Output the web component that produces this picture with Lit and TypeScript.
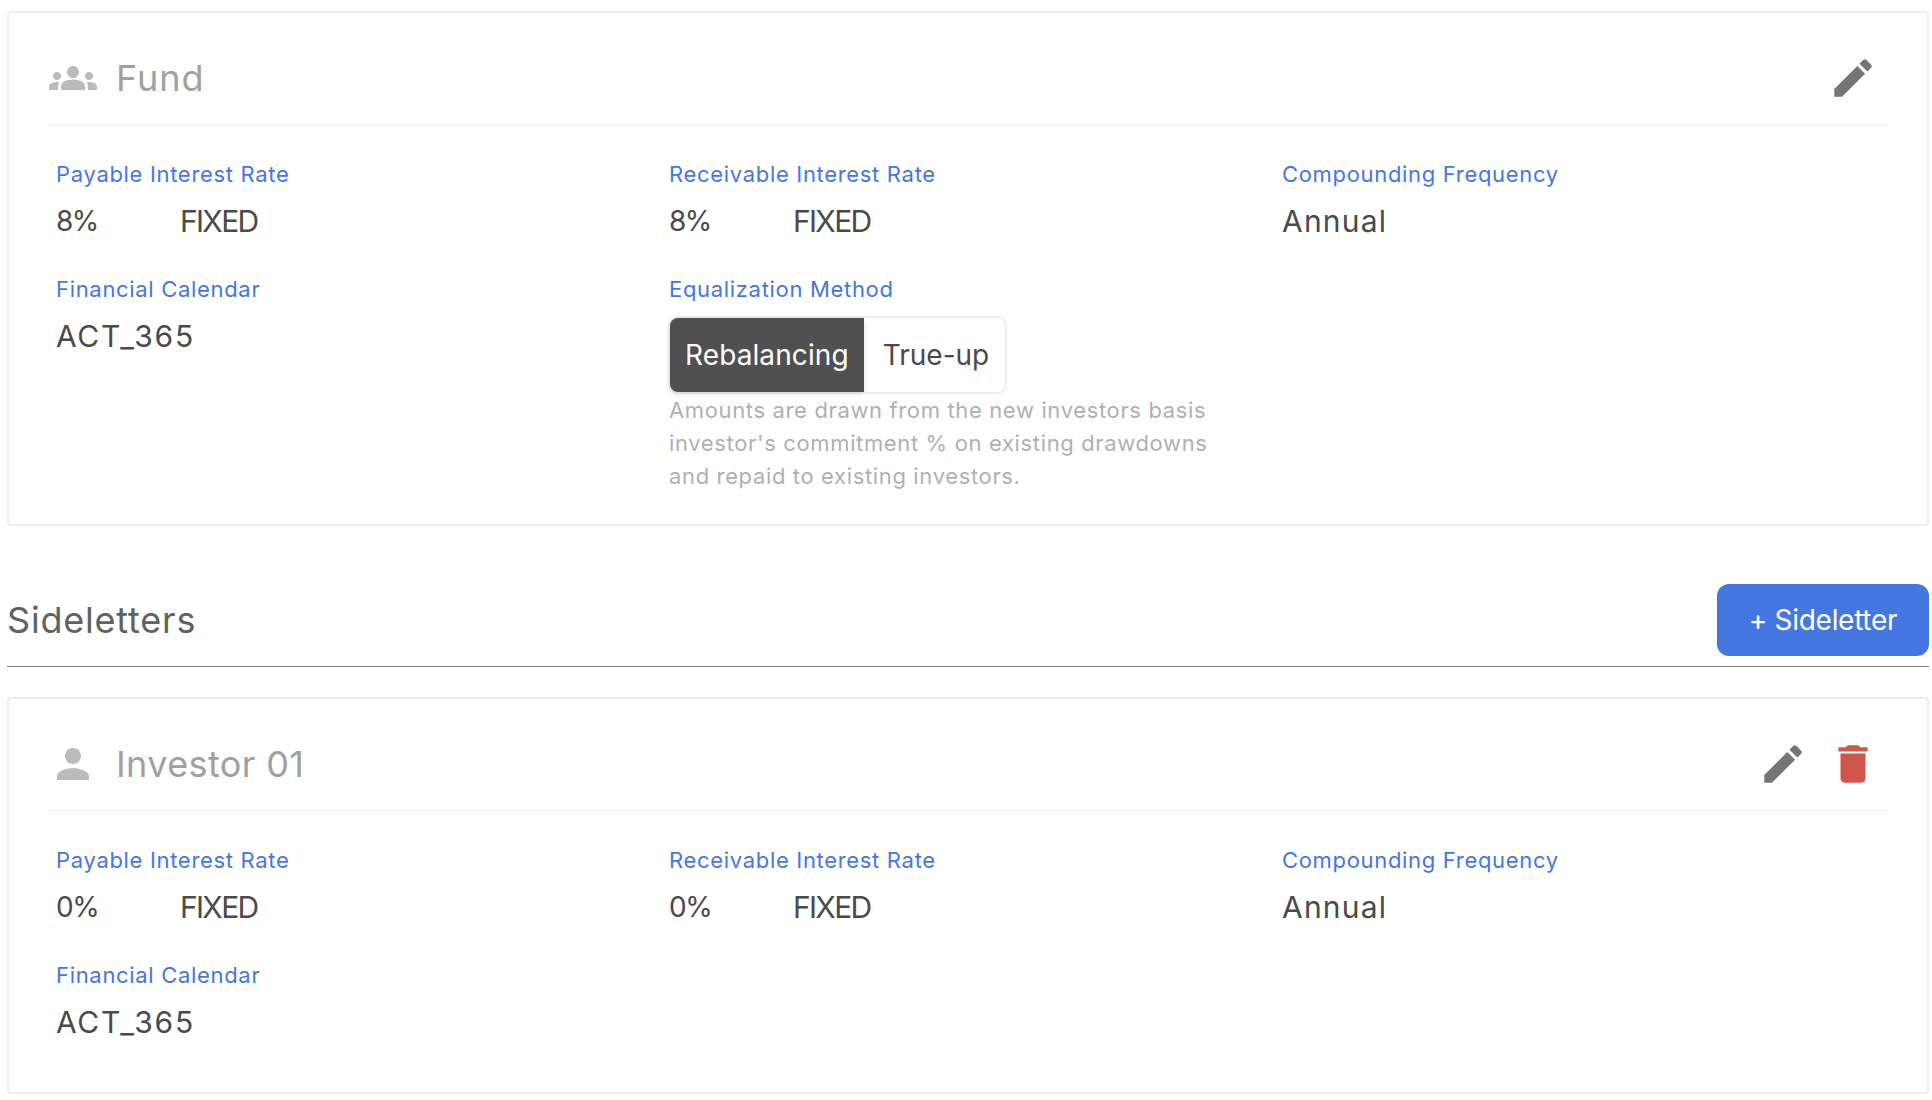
import { LitElement, html, css, svg } from "lit";
import { customElement } from "lit/decorators.js";

const EDIT = svg`<path d="M3 17.25V21h3.75L17.81 9.94l-3.75-3.75L3 17.25zM20.71 7.04c.39-.39.39-1.02 0-1.41l-2.34-2.34c-.39-.39-1.02-.39-1.41 0l-1.83 1.83 3.75 3.75 1.83-1.83z"/>`;
const TRASH = svg`<path d="M6 19c0 1.1.9 2 2 2h8c1.1 0 2-.9 2-2V7H6v12zM19 4h-3.5l-1-1h-5l-1 1H5v2h14V4z"/>`;
const GROUPS = svg`<path d="M12 12.75c1.63 0 3.07.39 4.24.9 1.08.48 1.76 1.56 1.76 2.73V18H6v-1.61c0-1.18.68-2.26 1.76-2.73 1.17-.52 2.61-.91 4.24-.91zM4 13c1.1 0 2-.9 2-2s-.9-2-2-2-2 .9-2 2 .9 2 2 2zm1.13 1.1c-.37-.06-.74-.1-1.13-.1-.99 0-1.93.21-2.78.58C.48 14.9 0 15.62 0 16.43V18h4.5v-1.61c0-.83.23-1.61.63-2.29zM20 13c1.1 0 2-.9 2-2s-.9-2-2-2-2 .9-2 2 .9 2 2 2zm4 3.43c0-.81-.48-1.53-1.22-1.85-.85-.37-1.79-.58-2.78-.58-.39 0-.76.04-1.13.1.4.68.63 1.46.63 2.29V18H24v-1.57zM12 6c1.66 0 3 1.34 3 3s-1.34 3-3 3-3-1.34-3-3 1.34-3 3-3z"/>`;
const PERSON = svg`<path d="M12 12c2.21 0 4-1.79 4-4s-1.79-4-4-4-4 1.79-4 4 1.79 4 4 4zm0 2c-2.67 0-8 1.34-8 4v2h16v-2c0-2.66-5.33-4-8-4z"/>`;

@customElement("app-root")
export class AppRoot extends LitElement {
  static styles = css`
    :host { display: block; font-family: Inter, "Liberation Sans", sans-serif; background: #fff; height: 1100px; overflow: hidden; box-sizing: border-box; padding: 11px 3px 0 7px; color: #4a4a4a; }
    * { box-sizing: border-box; }
    .card { border: 2px solid #eee; border-radius: 4px; padding: 30px 39px 31px 40px; background: #fff; }
    .card.last { padding-bottom: 47px; margin-top: 30px; }
    .head { display: flex; align-items: center; height: 82px; padding-bottom: 11px; border-bottom: 1px solid #eee; }
    .head .ico { width: 48px; height: 48px; fill: #bbb; flex: none; }
    .title { margin-left: 19px; font-size: 36px; line-height: 50px; color: #a0a0a0; flex: 1; letter-spacing: 0.4px; }
    .title.fund { letter-spacing: 1px; }
    .btn { width: 70px; height: 70px; display: flex; align-items: center; justify-content: center; flex: none; }
    .btn svg { width: 50px; height: 50px; fill: #757575; }
    .btn.del svg { fill: #cf564b; }
    .grid { display: grid; grid-template-columns: repeat(3, 1fr); padding-top: 32px; row-gap: 28px; }
    .field { padding: 0 7px; min-width: 0; }
    .label { font-size: 22px; line-height: 34px; color: #4478e0; letter-spacing: 0.68px; }
    .value { display: flex; font-size: 30px; line-height: 46px; margin-top: 7px; color: #4a4a4a; }
    .value .n { width: 124px; font-size: 28px; letter-spacing: -1.5px; }
    .value .fx { letter-spacing: -1.7px; }
    .value .word { letter-spacing: 1.2px; }
    .value .code { letter-spacing: 1.7px; }
    .toggle { display: inline-flex; margin-top: 10px; margin-left: -1px; height: 78px; border: 2px solid #eee; border-radius: 10px; font-size: 28px; }
    .opt { display: flex; align-items: center; padding: 0 15px; color: #4a4a4a; }
    .opt.on { background: #505050; color: #fff; border-radius: 8px 0 0 8px; box-shadow: 0 2px 6px rgba(0,0,0,.12); padding-right: 15px; letter-spacing: 0.1px; }
    .opt.off { padding-left: 19px; padding-right: 16px; }
    .help { font-size: 22px; line-height: 33px; color: #b0b0b0; letter-spacing: 0.64px; }
    .section { display: flex; align-items: center; justify-content: space-between; margin-top: 58px; height: 83px; padding-bottom: 10px; border-bottom: 1px solid #808080; }
    .section h2 { margin: 0; font-size: 36px; font-weight: 400; color: #616161; letter-spacing: 0.8px; }
    .add { height: 72px; width: 212px; border-radius: 12px; background: #4478e0; color: #fff; font-size: 28px; letter-spacing: -0.3px; display: flex; align-items: center; justify-content: center; }
  `;

  private field(label: string, body: unknown) {
    return html`<div class="field"><div class="label">${label}</div>${body}</div>`;
  }
  private rate(n: string) {
    return html`<div class="value"><span class="n">${n}</span><span class="fx">FIXED</span></div>`;
  }
  private val(v: string, cls: string) {
    return html`<div class="value"><span class=${cls}>${v}</span></div>`;
  }
  private icon(p: unknown, cls = "ico") {
    return html`<svg class=${cls} viewBox="0 0 24 24">${p}</svg>`;
  }

  render() {
    return html`
      <section class="card">
        <div class="head">
          ${this.icon(GROUPS)}
          <div class="title fund">Fund</div>
          <div class="btn">${this.icon(EDIT, "")}</div>
        </div>
        <div class="grid">
          ${this.field("Payable Interest Rate", this.rate("8%"))}
          ${this.field("Receivable Interest Rate", this.rate("8%"))}
          ${this.field("Compounding Frequency", this.val("Annual", "word"))}
          ${this.field("Financial Calendar", this.val("ACT_365", "code"))}
          ${this.field("Equalization Method", html`
            <div class="toggle"><div class="opt on">Rebalancing</div><div class="opt off">True-up</div></div>
            <div class="help">Amounts are drawn from the new investors basis<br>investor's commitment % on existing drawdowns<br>and repaid to existing investors.</div>
          `)}
        </div>
      </section>
      <div class="section"><h2>Sideletters</h2><div class="add">+ Sideletter</div></div>
      <section class="card last">
        <div class="head">
          ${this.icon(PERSON)}
          <div class="title">Investor 01</div>
          <div class="btn">${this.icon(EDIT, "")}</div>
          <div class="btn del">${this.icon(TRASH, "")}</div>
        </div>
        <div class="grid">
          ${this.field("Payable Interest Rate", this.rate("0%"))}
          ${this.field("Receivable Interest Rate", this.rate("0%"))}
          ${this.field("Compounding Frequency", this.val("Annual", "word"))}
          ${this.field("Financial Calendar", this.val("ACT_365", "code"))}
        </div>
      </section>
    `;
  }
}
